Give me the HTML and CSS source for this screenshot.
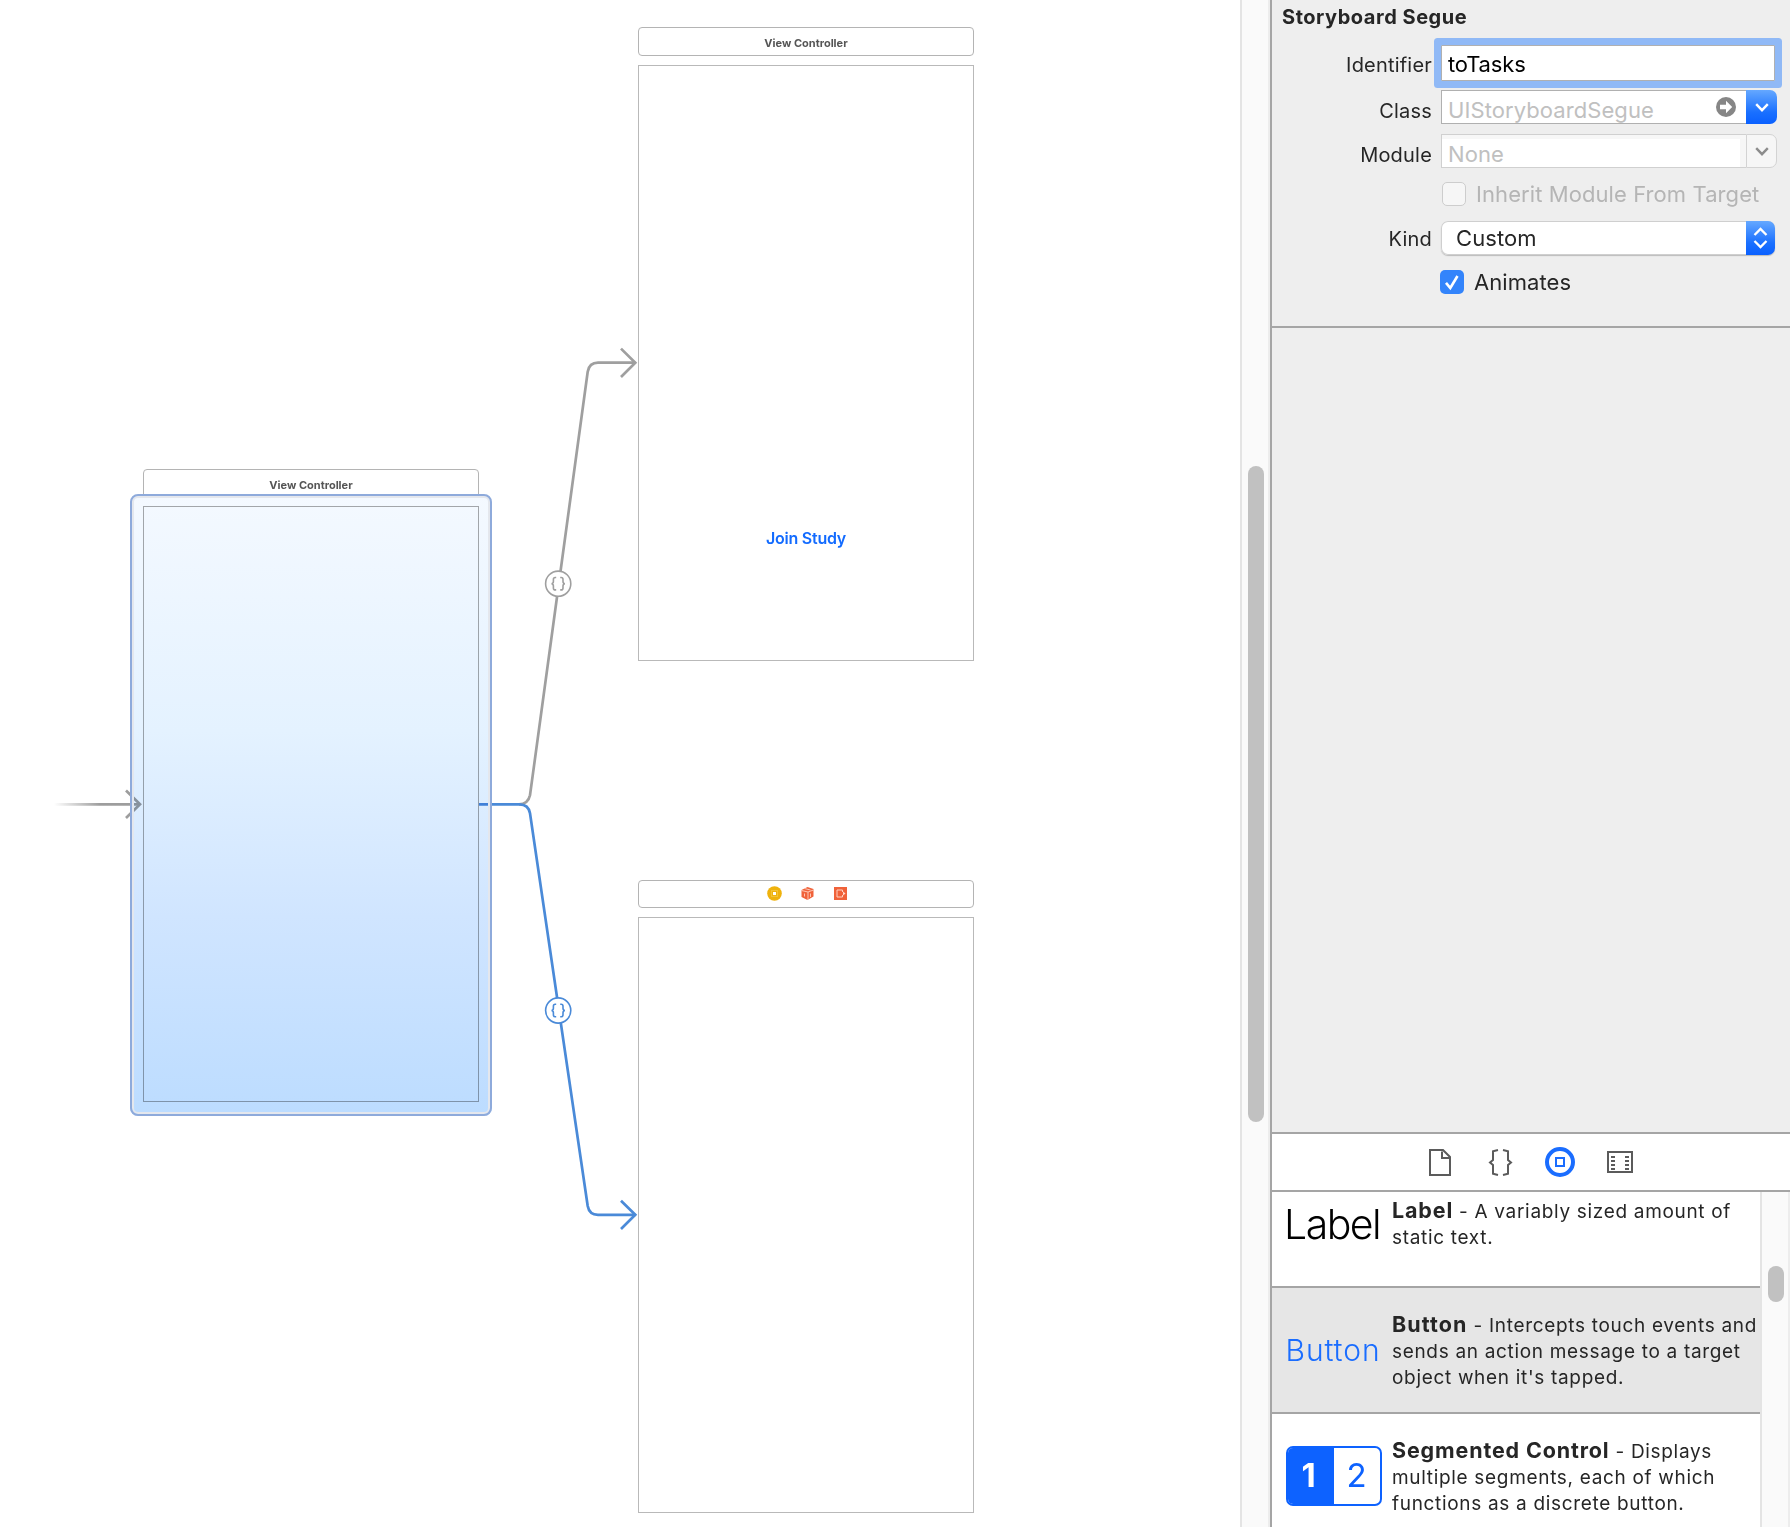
FILE: index.html
```html
<!DOCTYPE html>
<html lang="en">
<head>
<meta charset="utf-8">
<title>Storyboard</title>
<link rel="stylesheet" href="styles.css">
</head>
<body>
<main class="editor">
  <section class="canvas">
    <div class="scene scene-join">
      <div class="scene-title">View Controller</div>
      <div class="scene-view"><span class="join">Join Study</span></div>
    </div>
    <div class="scene scene-tasks">
      <div class="scene-title icons">
        <svg width="15" height="15" viewBox="0 0 15 15"><circle cx="7.5" cy="7.5" r="7.3" fill="#efb20d"/><rect x="4.5" y="4.5" width="6" height="6" fill="none" stroke="#f3c337"/><rect x="6" y="6" width="3" height="3" fill="#fff"/></svg>
        <svg width="15" height="15" viewBox="0 0 15 15"><path d="M7.5 1 13.5 3v7.500L7.500 14l-6-3V4z" fill="#f0623a"/><path d="M1.500 4.500 8 6l5.500-2M8 6v8M4.500 2.500 10.500 4M4.500 7.500v3M10.500 7.500v3.500" fill="none" stroke="#ffd0c0" stroke-width=".9"/></svg>
        <svg width="15" height="15" viewBox="0 0 15 15"><rect x="1" y="1" width="13" height="13" fill="#f0623a"/><path d="M9.500 6V4H4v7h5.500V9" fill="none" stroke="#ffd0c0" stroke-width="1"/><path d="M10 5.500l2.500 2-2.500 2z" fill="#ffd9cc"/></svg>
      </div>
      <div class="scene-view"></div>
    </div>
    <div class="scene scene-initial">
      <div class="scene-title">View Controller</div>
      <div class="scene-view"></div>
    </div>
    <svg class="segues" width="1240" height="1527" viewBox="0 0 1240 1527" fill="none">
      <defs><linearGradient id="fade" gradientUnits="userSpaceOnUse" x1="54" y1="0" x2="100" y2="0"><stop offset="0" stop-color="#9d9d9d" stop-opacity="0"/><stop offset="1" stop-color="#9d9d9d"/></linearGradient></defs>
      <path d="M54 803H140v2.700H54z" fill="url(#fade)"/>
      <path d="M126 790.500 140 804.300 126 818" stroke="#9d9d9d" stroke-width="2.700"/>
      <g stroke="#9f9f9f" stroke-width="2.700">
        <path d="M519 804.300q9 0 11-9L587.700 371.700q1.600-9 10.300-9H635.500"/>
        <path d="M621 348.600 635.300 362.700 621 377"/>
        <circle cx="558.200" cy="583.700" r="12.600" fill="#fff" stroke-width="1.600"/>
        <path d="M556.200 577.500h-1q-1.800 0-1.800 2v2q0 2-1.900 2.200 1.900.200 1.900 2.200v2q0 2 1.800 2h1M560.200 577.500h1q1.800 0 1.800 2v2q0 2 1.900 2.200-1.900.200-1.900 2.200v2q0 2-1.800 2h-1" stroke-width="1.600"/>
      </g>
      <g stroke="#4a8ad8" stroke-width="2.700">
        <path d="M479 804.300H519.500q9 0 10.500 9L587.700 1206q1.600 8.800 10.300 8.800H635.500"/>
        <path d="M621 1200.700 635.300 1214.800 621 1229"/>
        <circle cx="558.200" cy="1010.500" r="12.600" fill="#fff" stroke-width="1.600"/>
        <path d="M556.200 1004.300h-1q-1.800 0-1.800 2v2q0 2-1.900 2.200 1.900.200 1.900 2.200v2q0 2 1.800 2h1M560.200 1004.300h1q1.800 0 1.800 2v2q0 2 1.900 2.200-1.900.200-1.900 2.200v2q0 2-1.800 2h-1" stroke-width="1.600"/>
      </g>
    </svg>
    <div class="selection-fill"></div>
    <div class="selection-frame"></div>
  </section>
  <div class="canvas-scroll"><div class="thumb"></div></div>
  <aside class="panel">
    <section class="inspector">
      <h2>Storyboard Segue</h2>
      <div class="row identifier"><label>Identifier</label><div class="field focused">toTasks</div></div>
      <div class="row class"><label>Class</label>
        <div class="combo"><div class="field ghost">UIStoryboardSegue
          <svg class="go" width="20" height="20" viewBox="0 0 20 20"><circle cx="10" cy="10" r="10" fill="#868686"/><path d="M4 7.700h6V3.800l6.200 6.200L10 16.200v-3.900H4z" fill="#fff"/></svg></div>
          <div class="drop blue"><svg width="14" height="9" viewBox="0 0 14 9"><path d="M1.200 1.200 7 7.200l5.800-6" fill="none" stroke="#fff" stroke-width="2.400"/></svg></div></div></div>
      <div class="row module"><label>Module</label>
        <div class="combo disabled"><div class="field ghost">None</div>
          <div class="drop"><svg width="14" height="9" viewBox="0 0 14 9"><path d="M1.200 1.200 7 7.200l5.800-6" fill="none" stroke="#8c8c8c" stroke-width="2.400"/></svg></div></div></div>
      <div class="row inherit"><label></label><div class="check off"></div><span>Inherit Module From Target</span></div>
      <div class="row kind"><label>Kind</label><div class="select"><span>Custom</span>
          <div class="step"><svg width="15" height="22" viewBox="0 0 15 22"><path d="M1.500 8 7.500 2l6 6M1.500 14l6 6 6-6" fill="none" stroke="#fff" stroke-width="2.300"/></svg></div></div></div>
      <div class="row animates"><label></label><div class="check on"><svg width="24" height="24" viewBox="0 0 24 24"><path d="M6 12.800 10.300 18 17.500 6" fill="none" stroke="#fff" stroke-width="2.600"/></svg></div><span>Animates</span></div>
    </section>
    <div class="blank"></div>
    <nav class="library-tabs">
      <svg width="30" height="30" viewBox="0 0 30 30" fill="none" stroke="#5b5b5b" stroke-width="2"><path d="M5 3h13l7 7v18H5zM17 4.500V11h7.500"/></svg>
      <svg width="30" height="30" viewBox="0 0 30 30" fill="none" stroke="#5b5b5b" stroke-width="2"><path d="M13 3 8 4.200V13l-3 2.500L8 18v8.800l5 1.200M18 3l5 1.200V13l3 2.500-3 2.500v8.800L18 28"/></svg>
      <svg width="30" height="30" viewBox="0 0 30 30" fill="none" stroke="#1a6dff"><circle cx="15" cy="15" r="13" stroke-width="4"/><path d="M11 11h8v8h-8z" stroke-width="2"/></svg>
      <svg width="30" height="30" viewBox="0 0 30 30" fill="none" stroke="#5b5b5b" stroke-width="2"><path d="M3 5h24v20H3zM6 10h4M6 14h4M6 18h4M6 22h4M20 10h4M20 14h4M20 18h4M20 22h4"/></svg>
    </nav>
    <section class="library">
      <div class="list">
        <div class="item"><div class="thumbnail t-label">Label</div><p><strong>Label</strong> - A variably sized amount of<br>static text.</p></div>
        <div class="item active"><div class="thumbnail t-button">Button</div><p><strong>Button</strong> - Intercepts touch events and<br>sends an action message to a target<br>object when it's tapped.</p></div>
        <div class="item"><div class="thumbnail segmented"><b>1</b><span>2</span></div><p><strong>Segmented Control</strong> - Displays<br>multiple segments, each of which<br>functions as a discrete button.</p></div>
      </div>
      <div class="list-scroll"><div class="thumb"></div></div>
    </section>
  </aside>
</main>
</body>
</html>
```
FILE: styles.css
```css
* { box-sizing: border-box; }
body { margin: 0; background: #fff; font-family: Inter, "Liberation Sans", sans-serif; color: #262626; }
svg { display: block; flex: none; }
.editor { display: flex; width: 1790px; height: 1527px; overflow: hidden; }

/* Canvas: scenes are free-floating nodes */
.canvas { position: relative; width: 1240px; height: 1527px; flex: none; overflow: hidden; }
.scene { position: absolute; width: 336px; }
.scene-join { left: 638px; top: 27px; }
.scene-tasks { left: 638px; top: 880px; }
.scene-initial { left: 143px; top: 469px; }
.scene-title { display: flex; justify-content: center; align-items: center; height: 29px; padding-top: 2px; border: 1px solid #b4b4b4; border-radius: 4px; font-size: 11px; font-weight: 700; color: #555; }
.scene-title.icons { gap: 18px; height: 28px; padding: 0 0 1px 2px; }
.scene-view { display: flex; justify-content: center; margin-top: 9px; height: 596px; border: 1px solid #b9b9b9; }
.scene-initial .scene-view { margin-top: 8px; border-color: #aaa; }
.join { margin-top: 462px; font-size: 16px; line-height: 20px; font-weight: 600; letter-spacing: -.25px; color: #126bff; }
.segues { position: absolute; left: 0; top: 0; }
.selection-fill { position: absolute; left: 130px; top: 494px; width: 362px; height: 622px; border-radius: 8px; background: linear-gradient(#f4f9ff, #e4f2ff 38%, #d0e5ff 68%, #bcdcff); mix-blend-mode: multiply; }
.selection-frame { position: absolute; left: 130px; top: 494px; width: 362px; height: 622px; border-radius: 8px; border: 2px solid #8eaadb; box-shadow: inset 0 0 0 2px #e4e7ed; }

.canvas-scroll { width: 30px; flex: none; padding: 466px 0 0 6px; background: #fafafa; border-left: 2px solid #e4e4e4; border-right: 2px solid #ededed; }
.canvas-scroll .thumb { width: 16px; height: 656px; border-radius: 8px; background: #c1c1c1; }

/* Inspector */
.panel { width: 520px; flex: none; display: flex; flex-direction: column; border-left: 2px solid #a5a5a5; background: #eee; }
.inspector { height: 328px; padding-top: 5px; border-bottom: 2px solid #a5a5a5; font-size: 22px; }
h2 { margin: 0 0 16px 10px; font-size: 20px; line-height: 24px; font-weight: 700; letter-spacing: .53px; }
.row { display: flex; align-items: center; height: 34px; letter-spacing: .08px; }
label { width: 160px; margin-right: 9px; text-align: right; font-size: 20px; letter-spacing: .2px; }
.identifier { height: 36px; margin-bottom: 9px; }
.identifier label { padding-top: 3px; }
.kind label { padding-top: 2px; }
.class { margin-bottom: 10px; }
.class label, .module label { padding-top: 7px; }
.module { margin-bottom: 14px; }
.inherit { height: 24px; margin-bottom: 15px; color: #b5b5b5; }
.kind { margin-bottom: 15px; }
.animates { height: 24px; }
.field { display: flex; align-items: center; width: 334px; height: 36px; padding: 1px 6px 0; background: #fff; border: 1px solid #b0b0b0; }
.focused { color: #000; letter-spacing: -.15px; box-shadow: 0 0 0 7px #90b9f6; border-radius: 1px; }
.combo { display: flex; width: 336px; height: 34px; }
.ghost { position: relative; width: 305px; height: 34px; padding-top: 6px; border-right: 0; color: #c0c0c0; }
.go { position: absolute; right: 10px; top: 6px; }
.drop { display: flex; align-items: center; justify-content: center; width: 31px; height: 34px; border: 1px solid #d3d3d3; border-radius: 0 7px 7px 0; background: #f6f6f6; }
.blue { border: 0; }
.blue, .step { background: linear-gradient(#65a8ff, #1a70ff 65%, #0a60ff); }
.disabled .field { border-color: #d0d0d0; box-shadow: inset 0 4px #f7f7f7, inset -6px 0 #f6f6f6; }
.check { width: 24px; height: 24px; margin-right: 10px; border-radius: 5px; }
.off { margin-left: 1px; border: 1px solid #cdcdcd; background: #f6f6f6; }
.on { margin-left: -1px; background: #3384fb; }
.select { display: flex; align-items: center; justify-content: space-between; width: 334px; height: 34px; padding-left: 15px; border-radius: 7px; background: #fff; box-shadow: 0 0 0 1px #cfcfcf inset, 0 1px 1px #bbb; }
.step { display: flex; align-items: center; justify-content: center; width: 29px; height: 34px; border-radius: 0 7px 7px 0; }
.blank { height: 804px; }

/* Object library */
.library-tabs { display: flex; justify-content: center; align-items: center; gap: 30px; height: 60px; padding-right: 2px; border: solid #a5a5a5; border-width: 2px 0; background: #fff; }
.library { display: flex; height: 335px; overflow: hidden; background: #fff; }
.list { width: 488px; margin-top: -18px; }
.item { display: flex; gap: 10px; height: 126px; padding-left: 14px; border-bottom: 2px solid #a5a5a5; }
.item:first-child { height: 114px; }
.active { background: #e6e6e6; }
.item p { margin: 25px 0 0; font-size: 19px; line-height: 26px; letter-spacing: .68px; white-space: nowrap; }
.item strong { font-size: 21.5px; line-height: 1; letter-spacing: .85px; }
.active strong { letter-spacing: 1.1px; }
.thumbnail { width: 96px; flex: none; white-space: nowrap; }
.t-label { padding-top: 25px; font-size: 41px; line-height: 50px; font-weight: 350; letter-spacing: -1.5px; text-indent: -2px; color: #000; }
.t-button { padding-top: 44px; font-size: 30px; line-height: 36px; font-weight: 350; letter-spacing: .9px; text-indent: -.5px; color: #1a6dff; }
.segmented { display: grid; grid-template-columns: 1fr 1fr; height: 60px; margin-top: 32px; border: 2px solid #0d62ff; border-radius: 7px; overflow: hidden; font-size: 33px; line-height: 55px; text-align: center; color: #0d62ff; }
.segmented b { padding-right: 5px; background: #0d62ff; color: #fff; }
.segmented span { padding-right: 1px; }
.list-scroll { width: 30px; padding: 74px 0 0 6px; background: #fafafa; border-left: 2px solid #e4e4e4; border-right: 2px solid #ededed; }
.list-scroll .thumb { width: 16px; height: 36px; border-radius: 8px; background: #c1c1c1; }
```
